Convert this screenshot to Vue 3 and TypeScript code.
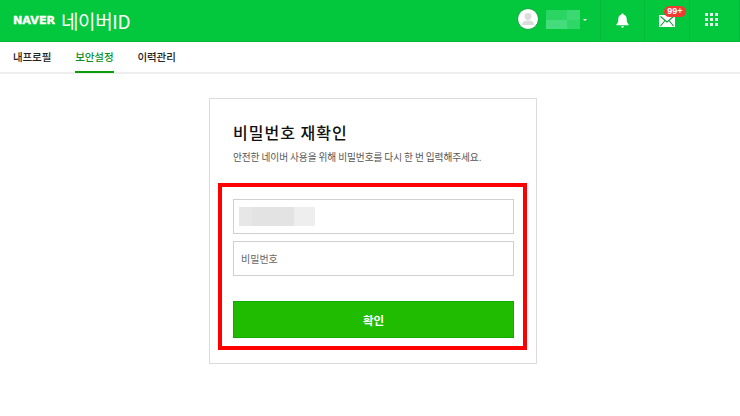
<script setup lang="ts">
const tabs: { label: string; active?: boolean }[] = [
  { label: '내프로필' },
  { label: '보안설정', active: true },
  { label: '이력관리' },
]
const dots: number[] = Array.from({ length: 9 }, (_, i) => i)
</script>

<template>
  <div class="page">
    <header class="top">
      <div class="brand">
        <span class="naver">NAVER</span>
        <span class="service">네이버ID</span>
      </div>
      <div class="actions">
        <div class="profile">
          <span class="avatar">
            <svg width="20" height="20" viewBox="0 0 20 20">
              <circle cx="10" cy="7.5" r="3.4" fill="#dcdcdc" />
              <path d="M4 16c0-3.200 2.800-4.400 6-4.400s6 1.200 6 4.400z" fill="#dcdcdc" />
            </svg>
          </span>
          <span class="blur-name">
            <i class="b1"></i><i class="b2"></i>
          </span>
          <span class="caret"></span>
        </div>
        <div class="cell bell">
          <svg width="13" height="15" viewBox="0 0 14 16">
            <path d="M7 0.500c.8 0 1.300.5 1.300 1.200 2.200.6 3.200 2.400 3.200 4.600 0 3 .6 4.400 2 5.700v1H.5v-1c1.400-1.300 2-2.700 2-5.700 0-2.200 1-4 3.200-4.600C5.700 1 6.200.5 7 .5z" fill="#fff" />
            <path d="M5.300 14.200h3.400c0 1-.7 1.500-1.700 1.500s-1.700-.5-1.700-1.500z" fill="#fff" />
          </svg>
        </div>
        <div class="cell mail">
          <svg width="16" height="12" viewBox="0 0 16 12">
            <rect width="16" height="12" fill="#fff" />
            <path d="M1.500 1.500l6.500 5.500 6.500-5.500M1.500 11l4.500-5.500M14.500 11l-4.500-5.500" fill="none" stroke="#0a9e3a" stroke-width="1.100" />
          </svg>
          <span class="badge">99+</span>
        </div>
        <div class="cell apps">
          <span class="grid">
            <i v-for="d in dots" :key="d"></i>
          </span>
        </div>
      </div>
    </header>

    <nav class="tabs">
      <a v-for="t in tabs" :key="t.label" class="tab" :class="{ on: t.active }">{{ t.label }}</a>
    </nav>

    <main class="main">
      <section class="card">
        <h1 class="title">비밀번호 재확인</h1>
        <p class="desc">안전한 네이버 사용을 위해 비밀번호를 다시 한 번 입력해주세요.</p>
        <div class="mark">
          <div class="field">
            <span class="blur-id">
              <i class="c1"></i><i class="c2"></i><i class="c3"></i>
            </span>
          </div>
          <div class="field second"><span class="ph">비밀번호</span></div>
          <button class="ok" type="button">확인</button>
        </div>
      </section>
    </main>
  </div>
</template>

<style>
html, body { margin: 0; background: #fff; }
</style>

<style scoped>
.page {
  width: 740px;
  height: 416px;
  overflow: hidden;
  font-family: "Noto Sans CJK KR", "Noto Sans", sans-serif;
  color: #222;
}
.top {
  height: 42px;
  box-sizing: border-box;
  background: #03c73c;
  border-bottom: 1px solid #06b838;
  display: flex;
  justify-content: space-between;
  align-items: stretch;
}
.brand {
  display: flex;
  align-items: center;
  padding-left: 13px;
  color: #fff;
}
.naver {
  font-family: "DejaVu Sans", sans-serif;
  font-weight: 700;
  font-size: 10px;
  width: 48px;
  transform: scaleX(1.12);
  transform-origin: left center;
  -webkit-text-stroke: 0.3px #fff;
}
.service {
  font-size: 19px;
  line-height: 22px;
  letter-spacing: -0.4px;
  font-weight: 400;
}
.actions { display: flex; align-items: stretch; }
.profile {
  display: flex;
  align-items: center;
  width: 100px;
  padding: 0 0 3px 17px;
  box-sizing: border-box;
}
.avatar {
  width: 22px;
  height: 22px;
  box-sizing: border-box;
  border: 1px solid #0aa83a;
  border-radius: 50%;
  background: #fff;
  display: flex;
  align-items: center;
  justify-content: center;
  overflow: hidden;
}
.blur-name { display: flex; margin-left: 7px; height: 19px; width: 34px; }
.blur-name i { display: block; height: 100%; }
.b1 { width: 21px; background: linear-gradient(#2ad564 55%, #45dc7c 55%); }
.b2 { width: 13px; background: linear-gradient(#3bd972 55%, #2fd668 55%); }
.caret {
  margin: 2px 0 0 3px;
  width: 0;
  height: 0;
  border-left: 2.500px solid transparent;
  border-right: 2.500px solid transparent;
  border-top: 2.500px solid #fff;
}
.cell {
  width: 44px;
  border-left: 1px solid #07b93b;
  display: flex;
  align-items: center;
  justify-content: center;
  position: relative;
  box-sizing: border-box;
}
.bell svg { margin-bottom: 1px; }
.mail { width: 45px; }
.mail svg { margin-top: 1px; margin-right: 1px; }
.badge {
  position: absolute;
  top: 6px;
  left: 19px;
  height: 11px;
  width: 22px;
  border-radius: 6px;
  background: #f13a32;
  color: #fff;
  font-family: "Liberation Sans", sans-serif;
  font-size: 9px;
  font-weight: 700;
  line-height: 11px;
  text-align: center;
}
.apps { width: 51px; padding-right: 7px; border-right: 1px solid #07b93b; }
.grid {
  display: grid;
  grid-template-columns: repeat(3, 3px);
  gap: 2px;
  margin-bottom: 2px;
}
.grid i { display: block; width: 3px; height: 3px; background: #dff7e6; }
.tabs {
  height: 32px;
  box-sizing: border-box;
  border-bottom: 2px solid #eee;
  display: flex;
  gap: 24px;
  padding-left: 13px;
}
.tab {
  font-size: 10.500px;
  font-weight: 500;
  line-height: 29px;
  height: 31px;
  color: #222;
  letter-spacing: -0.1px;
  box-sizing: border-box;
}
.tab.on {
  color: #0a8f1e;
  border-bottom: 2px solid #0a9e0a;
}
.main { display: flex; padding: 24px 0 0 209px; }
.card {
  width: 328px;
  height: 266px;
  box-sizing: border-box;
  border: 1px solid #dcdcdc;
  padding: 22px 9px 0 8px;
}
.title {
  margin: 0 0 0 15px;
  font-size: 16px;
  line-height: 22px;
  font-weight: 500;
  color: #111;
  letter-spacing: 1px;
}
.desc {
  margin: 7px 0 0 15px;
  font-size: 9.700px;
  line-height: 14px;
  color: #555;
  letter-spacing: -0.1px;
}
.mark {
  margin-top: 19px;
  height: 167px;
  box-sizing: border-box;
  border: 4px solid #f00;
  padding: 12px 9px 0 11px;
}
.field {
  height: 35px;
  box-sizing: border-box;
  border: 1px solid #d0d0d0;
  display: flex;
  align-items: center;
  padding-left: 5px;
}
.second { margin-top: 7px; padding-left: 7px; }
.blur-id { display: flex; height: 19px; }
.blur-id i { display: block; height: 100%; }
.c1 { width: 13px; background: #e8e7e7; }
.c2 { width: 42px; background: #e3e3e3; }
.c3 { width: 21px; background: #eeeeee; }
.ph { font-size: 10px; color: #666; }
.ok {
  display: block;
  width: 100%;
  height: 37px;
  margin: 25px 0 0;
  padding: 0;
  border: 1px solid #12ab00;
  background: #1fbc02;
  color: #fff;
  font-family: inherit;
  font-size: 11.500px;
  font-weight: 700;
}
</style>
